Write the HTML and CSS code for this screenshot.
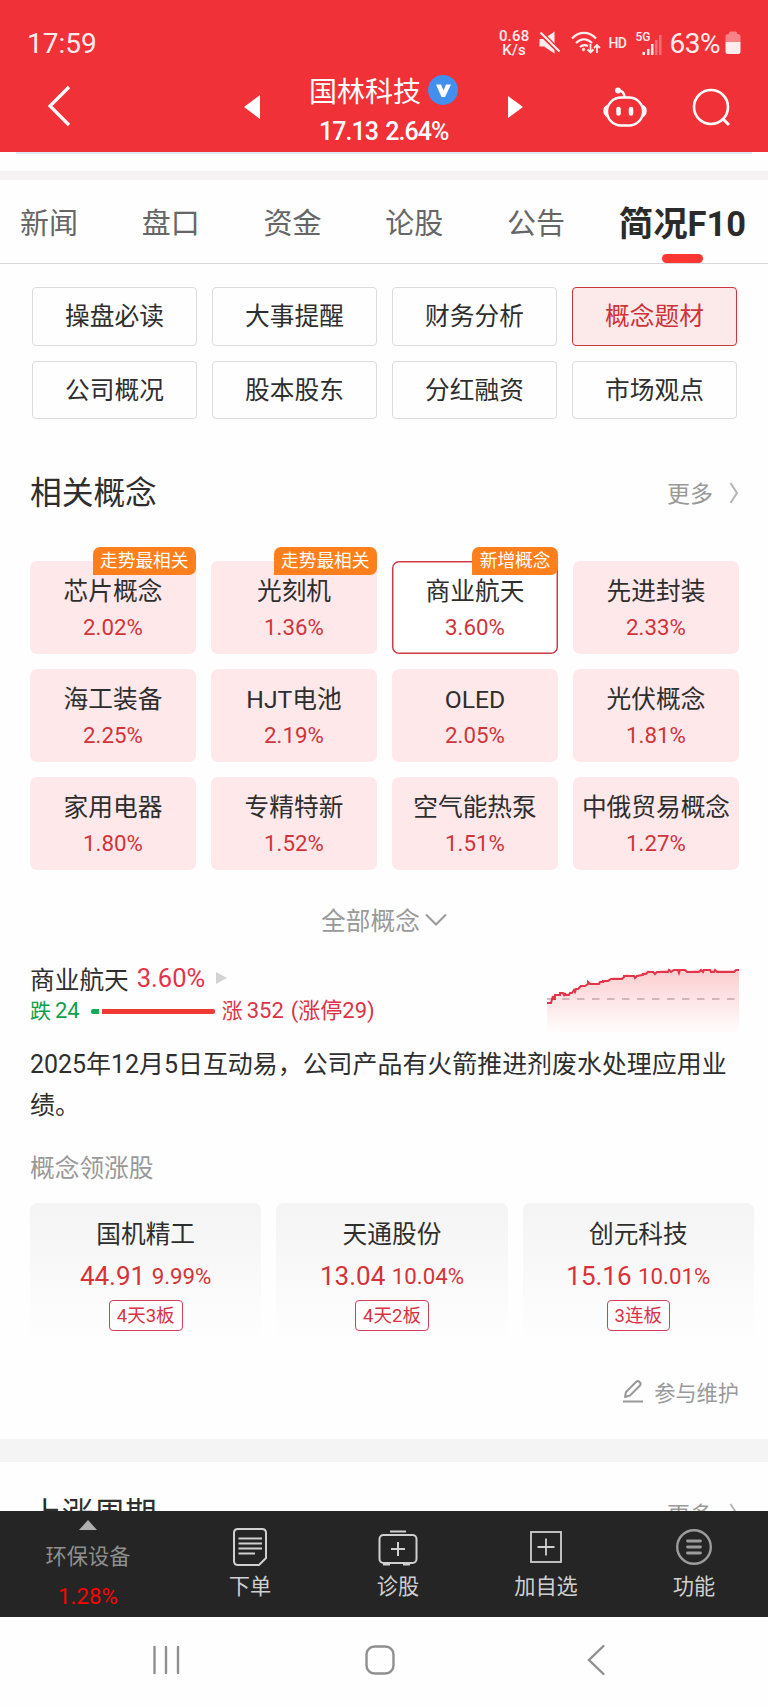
FILE: index.html
```html
<!DOCTYPE html>
<html lang="zh-CN">
<head>
    <meta charset="UTF-8">
    <meta name="viewport" content="width=device-width, initial-scale=1.0">
    <title>国林科技 - 简况F10</title>
    <link rel="stylesheet" href="styles.css">
</head>
<body>
    <header class="header">
        <div class="status-bar">
            <span class="time">17:59</span>
            <div class="status-icons">
                <div class="speed"><span>0.68</span><span>K/s</span></div>
                <svg class="mute" width="22" height="24" viewBox="0 0 22 24">
                    <path d="M0.500 8H5L15.500 0.500V22.500L5 15.500H0.500Z" fill="#ffecec"/>
                    <path d="M-1 -0.500L22 22" stroke="#f13138" stroke-width="5"/>
                    <path d="M1.500 1.500L20.500 20.500" stroke="#ffecec" stroke-width="2.200"/>
                </svg>
                <svg class="wifi" width="30" height="24" viewBox="0 0 30 24" fill="none" stroke="#ffecec" stroke-width="2.200">
                    <path d="M1 7.500C8 0 18 0 25 7.500M5 12C10 7 16 7 21 12M9 16C12 13.500 14 13.500 17 15"/>
                    <circle cx="12.500" cy="18.500" r="1.200" fill="#ffecec" stroke-width="1"/>
                    <path d="M19.500 13V21M16.500 18.500L19.500 21.500L22.500 18.500M26 22V14M23 17L26 14L29 17" stroke-width="1.800"/>
                </svg>
                <span class="hd">HD</span>
                <div class="signal">
                    <span class="net">5G</span>
                    <svg width="20" height="22" viewBox="0 0 20 22" fill="#ffecec">
                        <rect x="0.500" y="18" width="2.500" height="3"/>
                        <rect x="5" y="15" width="2.500" height="6"/>
                        <rect x="9" y="10" width="2.500" height="11"/>
                        <rect x="13" y="6" width="2.500" height="15" opacity=".35"/>
                        <rect x="17" y="1" width="2.500" height="20" opacity=".35"/>
                    </svg>
                </div>
                <span class="percent">63%</span>
                <svg class="battery" width="16" height="24" viewBox="0 0 16 24">
                    <path d="M4 2Q4 0.500 5.500 0.500H10.500Q12 0.500 12 2V3H13Q15.500 3 15.500 5.500V11H0.500V5.500Q0.500 3 3 3H4Z" fill="#f88287"/>
                    <path d="M0.500 11H15.500V20.500Q15.500 23 13 23H3Q0.500 23 0.500 20.500Z" fill="#ffecec"/>
                </svg>
            </div>
        </div>
        <div class="title-bar">
            <svg class="back" width="24" height="42" viewBox="0 0 24 42" fill="none" stroke="#fff" stroke-width="3.200">
                <path d="M22 2L3 21L22 40"/>
            </svg>
            <svg class="prev" width="16" height="24" viewBox="0 0 16 24"><path d="M0 12L16 0V24Z" fill="#fff"/></svg>
            <div class="stock">
                <div class="stock-name">
                    国林科技
                    <svg width="30" height="30" viewBox="0 0 30 30">
                        <circle cx="15" cy="15" r="15" fill="#438fee"/>
                        <path d="M8 9.500H13L15.500 15.500L18 9.500H23L17 22H13.500Z" fill="#fff"/>
                    </svg>
                </div>
                <div class="stock-price">17.13 2.64%</div>
            </div>
            <svg class="next" width="15" height="22" viewBox="0 0 15 22"><path d="M0 0L15 11L0 22Z" fill="#fff"/></svg>
            <svg class="robot" width="44" height="40" viewBox="0 0 44 40" fill="none" stroke="#fff" stroke-width="2.400" stroke-linecap="round">
                <circle cx="15" cy="3.500" r="2.200" fill="#fff" stroke-width="1.500"/>
                <path d="M16 3.500Q21 4 21.500 10"/>
                <rect x="4" y="10.500" width="36" height="28" rx="14"/>
                <path d="M3.500 19.500Q1.500 21 1.500 24T3.500 28.500M40.500 19.500Q42.500 21 42.500 24T40.500 28.500" stroke-width="2.500"/>
                <path d="M15.500 22V26.500M28 22V26.500" stroke-width="4.500"/>
            </svg>
            <svg class="search" width="40" height="40" viewBox="0 0 40 40" fill="none" stroke="#fff" stroke-width="2.600">
                <circle cx="19" cy="19" r="17"/>
                <path d="M30.500 30.500L37 37" stroke-width="3"/>
            </svg>
        </div>
    </header>

    <main class="content">
        <div class="top-line"></div>
        <nav class="tabs">
            <span>新闻</span>
            <span>盘口</span>
            <span>资金</span>
            <span>论股</span>
            <span>公告</span>
            <span class="active">简况F10</span>
        </nav>

        <div class="sub-tabs">
            <span>操盘必读</span>
            <span>大事提醒</span>
            <span>财务分析</span>
            <span class="active">概念题材</span>
            <span>公司概况</span>
            <span>股本股东</span>
            <span>分红融资</span>
            <span>市场观点</span>
        </div>

        <!-- 相关概念 -->
        <div class="section-head">
            <h2>相关概念</h2>
            <span class="more"><span>更多</span>
                <svg width="10" height="22" viewBox="0 0 10 22" fill="none" stroke="#b5b5b5" stroke-width="2"><path d="M1.500 1L8 11L1.500 21"/></svg>
            </span>
        </div>
        <div class="concepts">
            <div class="concept"><i class="badge">走势最相关</i><b>芯片概念</b><em>2.02%</em></div>
            <div class="concept"><i class="badge">走势最相关</i><b>光刻机</b><em>1.36%</em></div>
            <div class="concept selected"><i class="badge">新增概念</i><b>商业航天</b><em>3.60%</em></div>
            <div class="concept"><b>先进封装</b><em>2.33%</em></div>
            <div class="concept"><b>海工装备</b><em>2.25%</em></div>
            <div class="concept"><b>HJT电池</b><em>2.19%</em></div>
            <div class="concept"><b>OLED</b><em>2.05%</em></div>
            <div class="concept"><b>光伏概念</b><em>1.81%</em></div>
            <div class="concept"><b>家用电器</b><em>1.80%</em></div>
            <div class="concept"><b>专精特新</b><em>1.52%</em></div>
            <div class="concept"><b>空气能热泵</b><em>1.51%</em></div>
            <div class="concept"><b>中俄贸易概念</b><em>1.27%</em></div>
        </div>
        <div class="all"><span>全部概念</span>
            <svg width="22" height="14" viewBox="0 0 22 14" fill="none" stroke="#999" stroke-width="2"><path d="M1 1.500L11 11.500L21 1.500"/></svg>
        </div>

        <!-- 选中概念详情 -->
        <div class="detail">
            <div class="detail-info">
                <div class="detail-name">商业航天 <span class="red">3.60%</span>
                    <svg width="11" height="12" viewBox="0 0 11 12"><path d="M0 0L11 6L0 12Z" fill="#d2d2d2"/></svg>
                </div>
                <div class="updown">
                    <span class="down"><small>跌</small>24</span>
                    <span class="bar-down"></span>
                    <span class="bar-up"></span>
                    <span class="up"><small>涨</small>352</span>
                    <span class="limit">(涨停29)</span>
                </div>
            </div>
            <svg class="chart" width="192" height="70" viewBox="0 0 192 70">
                <defs>
                    <linearGradient id="area" x1="0" y1="0" x2="0" y2="1">
                        <stop offset="0" stop-color="#fccdcf"/>
                        <stop offset="1" stop-color="#fff"/>
                    </linearGradient>
                </defs>
                <path d="M0 35H4L5 31H8V27L15 26L20 25L24 27L31 20L37 18L42 14L50 16L58 12L66 9H75L79 6L88 8L94 5L101 2L108 4L116 2L128 1H139L141 3L154 1H162L172 2H188L189 1H192V67H0Z" fill="url(#area)"/>
                <path d="M0 31H192" stroke="#c5a5aa" stroke-width="1.300" stroke-dasharray="7.500 7.500"/>
                <path d="M0 35H4L5 31L6 28V31H8V27H13V25H16L17 27L18 25V27H22L23 25H25L27 22L28 24L29 21H31L32 20L34 18H38L41 16V14L43 16H52L53 14H56V13H61L64 11H75L77 9V8H87L88 10L90 8L96 7V6H99L101 4H106L108 6L110 4H121L122 2L124 4L127 2H131L132 5L133 2H138L140 4H152L154 2L156 4L157 2H163L164 4H167L168 2L170 4H187L189 2H192" fill="none" stroke="#e5334a" stroke-width="2"/>
            </svg>
        </div>
        <p class="reason">2025年12月5日互动易，公司产品有火箭推进剂废水处理应用业绩。</p>

        <div class="leader-title">概念领涨股</div>
        <div class="leaders">
            <div class="leader"><b>国机精工</b><div class="price">44.91 <small>9.99%</small></div><span class="tag">4天3板</span></div>
            <div class="leader"><b>天通股份</b><div class="price">13.04 <small>10.04%</small></div><span class="tag">4天2板</span></div>
            <div class="leader"><b>创元科技</b><div class="price">15.16 <small>10.01%</small></div><span class="tag">3连板</span></div>
        </div>
        <div class="maintain">
            <svg width="22" height="24" viewBox="0 0 22 24" fill="none" stroke="#999" stroke-width="2">
                <path d="M3 18L4 13L14.500 2.500Q16 1.500 17.500 3Q19.500 4.500 18 6.500L8 16.500Z" stroke-linejoin="round"/>
                <path d="M1 22.500H21"/>
            </svg>
            参与维护
        </div>

        <div class="divider"></div>
        <div class="section-head next-head">
            <h2>上涨周期</h2>
            <span class="more"><span>更多</span>
                <svg width="10" height="22" viewBox="0 0 10 22" fill="none" stroke="#b5b5b5" stroke-width="2"><path d="M1.500 1L8 11L1.500 21"/></svg>
            </span>
        </div>
    </main>

    <!-- 底部操作栏 -->
    <footer class="toolbar">
        <div class="sector">
            <svg width="18" height="10" viewBox="0 0 18 10"><path d="M0 10L9 0L18 10Z" fill="#b0b0b0"/></svg>
            <span class="sector-name">环保设备</span>
            <span class="sector-pct">1.28%</span>
        </div>
        <div class="tool">
            <svg width="40" height="40" viewBox="0 0 40 40" fill="none" stroke="#d0d0d0" stroke-width="2">
                <path d="M8 2H32Q36 2 36 6V31L29 38H8Q4 38 4 34V6Q4 2 8 2Z"/>
                <path d="M8.500 11.500H32M8.500 16.500H32M8.500 21.500H32M8.500 26.500H25"/>
            </svg>
            下单
        </div>
        <div class="tool">
            <svg width="40" height="40" viewBox="0 0 40 40" fill="none" stroke="#d0d0d0" stroke-width="2">
                <rect x="1.500" y="8" width="37" height="28" rx="4"/>
                <path d="M12 4.500H28M5 37.500H12M25 37.500H32M20 15V29M13 22H27"/>
            </svg>
            诊股
        </div>
        <div class="tool">
            <svg width="40" height="40" viewBox="0 0 40 40" fill="none" stroke="#d0d0d0" stroke-width="1.800">
                <rect x="5" y="5" width="30" height="30"/>
                <path d="M20 11.500V28.500M11.500 20H28.500"/>
            </svg>
            加自选
        </div>
        <div class="tool">
            <svg width="40" height="40" viewBox="0 0 40 40" fill="none" stroke="#9c9c9c" stroke-width="2.400">
                <circle cx="20" cy="20" r="16.800"/>
                <path d="M13.500 14H26.500M13.500 20H26.500M13.500 26H26.500" stroke-width="2.800" stroke-linecap="round"/>
            </svg>
            功能
        </div>
    </footer>

    <div class="system-nav">
        <svg class="recent" width="28" height="30" viewBox="0 0 28 30" stroke="#8f8f8f" stroke-width="2.400" stroke-linecap="round"><path d="M2.500 2V28M14 2V28M26 2V28"/></svg>
        <svg class="home" width="30" height="30" viewBox="0 0 30 30" fill="none" stroke="#8f8f8f" stroke-width="2.400"><rect x="1.500" y="1.500" width="27" height="27" rx="8"/></svg>
        <svg class="sys-back" width="18" height="32" viewBox="0 0 18 32" fill="none" stroke="#8f8f8f" stroke-width="2.400" stroke-linecap="round"><path d="M16.500 2L2 16L16.500 30"/></svg>
    </div>
</body>
</html>
```

FILE: styles.css
```css
* {
    margin: 0;
    padding: 0;
    box-sizing: border-box;
}

body {
    width: 768px;
    height: 1707px;
    overflow: hidden;
    background: #fefefe;
    color: #2e2e2e;
    font-family: Roboto, "Noto Sans CJK SC", sans-serif;
    font-size: 24.7px;
    display: flex;
    flex-direction: column;
}

svg {
    display: block;
    flex: none;
}

b, i, em, h2 {
    font-weight: 400;
    font-style: normal;
}

.red {
    color: #e5334a;
    font-size: 25.500px;
}

/* 顶部 */
.header {
    height: 152px;
    background: #f13138;
    color: #fff;
    flex: none;
}

.status-bar {
    height: 64px;
    padding: 22px 26px 0 27px;
    display: flex;
    justify-content: space-between;
    color: #ffecec;
}

.time {
    font-size: 28px;
    line-height: 43px;
}

.status-icons {
    display: flex;
    align-items: center;
    height: 42px;
}

.speed {
    display: flex;
    flex-direction: column;
    align-items: center;
    font-size: 15px;
    line-height: 14px;
    font-weight: 500;
    letter-spacing: .2px;
}

.speed span {
    height: 14px;
}

.mute {
    margin-left: 10px;
}

.wifi {
    margin-left: 10px;
}

.hd {
    margin-left: 7px;
    font-size: 14px;
    font-weight: 500;
    letter-spacing: -.5px;
}

.signal {
    display: flex;
    margin-left: 9px;
    height: 24px;
}

.net {
    font-size: 12px;
    line-height: 12px;
    font-weight: 500;
    margin-right: -9px;
}

.signal svg {
    margin-top: 3px;
}

.percent {
    font-size: 28px;
    margin-left: 8px;
    letter-spacing: -.5px;
}

.battery {
    margin-left: 5px;
    margin-right: 1px;
}

.title-bar {
    height: 88px;
    display: flex;
    align-items: flex-start;
}

.back {
    margin: 21px 0 0 47px;
}

.prev {
    margin: 31px 0 0 173px;
}

.stock {
    width: 160px;
    margin-left: 49px;
}

.stock-name {
    display: flex;
    align-items: center;
    gap: 7px;
    font-size: 28px;
    line-height: 36px;
    margin-top: 11px;
    white-space: nowrap;
}

.stock-name svg {
    margin-top: -7px;
}

.stock-price {
    margin: 8px 0 0 10px;
    font-size: 25px;
    line-height: 26px;
    font-weight: 500;
    letter-spacing: -.95px;
    word-spacing: 2px;
    white-space: nowrap;
}

.next {
    margin: 32px 0 0 39px;
}

.robot {
    margin: 23px 0 0 80px;
}

.search {
    margin: 24px 0 0 45px;
}

/* 内容 */
.content {
    height: 1359px;
    overflow: hidden;
    flex: none;
}

.top-line {
    height: 28px;
    border-bottom: 9px solid #f4f2f3;
}

.top-line::before {
    content: "";
    display: block;
    height: 2px;
    margin: 0 16px;
    background: #dfe7f5;
}

.tabs {
    height: 84px;
    padding: 0 22px 0 20px;
    border-bottom: 1px solid #d8d8d8;
    display: flex;
    justify-content: space-between;
    font-size: 29px;
    line-height: 89px;
    color: #666;
}

.tabs .active {
    position: relative;
    height: 83px;
    color: #2b2b2b;
    font-size: 34.400px;
    font-weight: 700;
    margin-left: -10px;
}

.tabs .active::after {
    content: "";
    position: absolute;
    left: 43px;
    bottom: 0;
    width: 41px;
    height: 9px;
    border-radius: 5px;
    background: #fc3630;
}

.sub-tabs {
    margin: 23px 31px 0 32px;
    display: grid;
    grid-template-columns: repeat(4, 1fr);
    gap: 15px;
}

.sub-tabs span {
    height: 58.500px;
    line-height: 57px;
    border: 1.500px solid #dcdcdc;
    border-radius: 4px;
    text-align: center;
    white-space: nowrap;
}

.sub-tabs .active {
    color: #cf3238;
    background: #fceaea;
    border-color: #c9363c;
}

.section-head {
    height: 48px;
    margin: 50px 29px 0 30px;
    display: flex;
    justify-content: space-between;
    align-items: center;
}

.section-head h2 {
    font-size: 31.700px;
    line-height: 48px;
    padding-top: 2px;
}

.more {
    display: flex;
    align-items: center;
    gap: 16px;
    font-size: 23px;
    color: #999;
}

.more span {
    padding-bottom: 3px;
}

.concepts {
    margin: 44px 29px 0 30px;
    display: grid;
    grid-template-columns: repeat(4, 1fr);
    gap: 15px;
}

.concept {
    position: relative;
    height: 93px;
    padding-top: 13px;
    border-radius: 7px;
    background: #fee8ea;
    text-align: center;
    display: flex;
    flex-direction: column;
}

.concept b {
    line-height: 36px;
    white-space: nowrap;
}

.concept em {
    font-size: 22.300px;
    line-height: 34px;
    color: #d0343a;
}

.concept.selected {
    background: #fff;
    box-shadow: inset 0 0 0 1.500px #cf3a48;
}

.badge {
    position: absolute;
    top: -14px;
    right: 0;
    height: 28px;
    padding: 0 7.500px;
    border-radius: 7px 7px 7px 0;
    background: #fe7f1c;
    color: #fff;
    font-size: 17.700px;
    line-height: 29px;
}

.all {
    height: 40px;
    margin-top: 30px;
    display: flex;
    justify-content: center;
    align-items: center;
    gap: 5px;
    color: #999;
}

.all span {
    padding-bottom: 3px;
}

.detail {
    height: 86px;
    margin: 20px 29px 0 30px;
    display: flex;
    justify-content: space-between;
}

.detail-name {
    height: 36px;
    display: flex;
    align-items: center;
    gap: 8px;
}

.detail-name svg {
    margin-left: 3px;
}

.updown {
    display: flex;
    align-items: center;
    height: 26px;
    margin-top: 2px;
    font-size: 22px;
    line-height: 26px;
}

.updown small {
    font-size: 21px;
    margin-right: 4px;
}

.down {
    color: #0fa04d;
}

.up,
.limit {
    color: #dc3345;
}

.bar-down {
    width: 8px;
    height: 5px;
    margin: 0 3px 0 11px;
    background: #12ab57;
    border-radius: 2px 0 0 2px;
}

.bar-up {
    width: 113px;
    height: 5px;
    margin-right: 7px;
    background: #ef3a33;
    border-radius: 0 2px 2px 0;
}

.limit {
    margin-left: 7px;
}

.chart {
    margin-top: 8px;
}

.reason {
    margin: -2px 20px 0 30px;
    font-size: 24.950px;
    line-height: 41px;
}

.leader-title {
    margin: 22px 0 0 30px;
    line-height: 41px;
    color: #999;
}

.leaders {
    margin: 14px 14px 0 30px;
    display: grid;
    grid-template-columns: repeat(3, 1fr);
    gap: 15px;
}

.leader {
    height: 139px;
    padding-top: 14px;
    border-radius: 7px;
    background: linear-gradient(#f4f4f4, #fefefe);
    display: flex;
    flex-direction: column;
    align-items: center;
}

.leader b {
    line-height: 36px;
}

.price {
    margin-top: 5px;
    font-size: 26px;
    line-height: 36px;
    color: #d63338;
}

.price small {
    font-size: 22.300px;
    position: relative;
    top: -1px;
}

.tag {
    margin-top: 5px;
    height: 31px;
    padding: 0 7px;
    border: 1px solid #d2405c;
    border-radius: 4px;
    background: #fffdfd;
    font-size: 18.500px;
    line-height: 30px;
    color: #d63345;
}

.maintain {
    margin: 33px 29px 0 0;
    height: 32px;
    display: flex;
    justify-content: flex-end;
    align-items: center;
    gap: 10px;
    font-size: 21.200px;
    color: #999;
}

.divider {
    height: 23px;
    margin-top: 32px;
    background: #f4f4f4;
}

.next-head {
    margin-top: 28px;
}

/* 底部 */
.toolbar {
    height: 106px;
    flex: none;
    background: #252525;
    display: flex;
    color: #d0d0d0;
    font-size: 21.200px;
}

.sector {
    width: 176px;
    display: flex;
    flex-direction: column;
    align-items: center;
    padding-top: 9px;
}

.sector-name {
    margin-top: 11px;
    line-height: 32px;
    color: #8f8f8f;
}

.sector-pct {
    margin-top: 7px;
    font-size: 22.300px;
    line-height: 32px;
    color: #f80606;
}

.tool {
    width: 148px;
    padding-top: 16px;
    display: flex;
    flex-direction: column;
    align-items: center;
    line-height: 39px;
}

.system-nav {
    flex: 1;
    display: flex;
    padding-top: 27px;
}

.recent {
    margin: 1px 0 0 152px;
}

.home {
    margin: 1px 0 0 185px;
}

.sys-back {
    margin-left: 192px;
}
```
